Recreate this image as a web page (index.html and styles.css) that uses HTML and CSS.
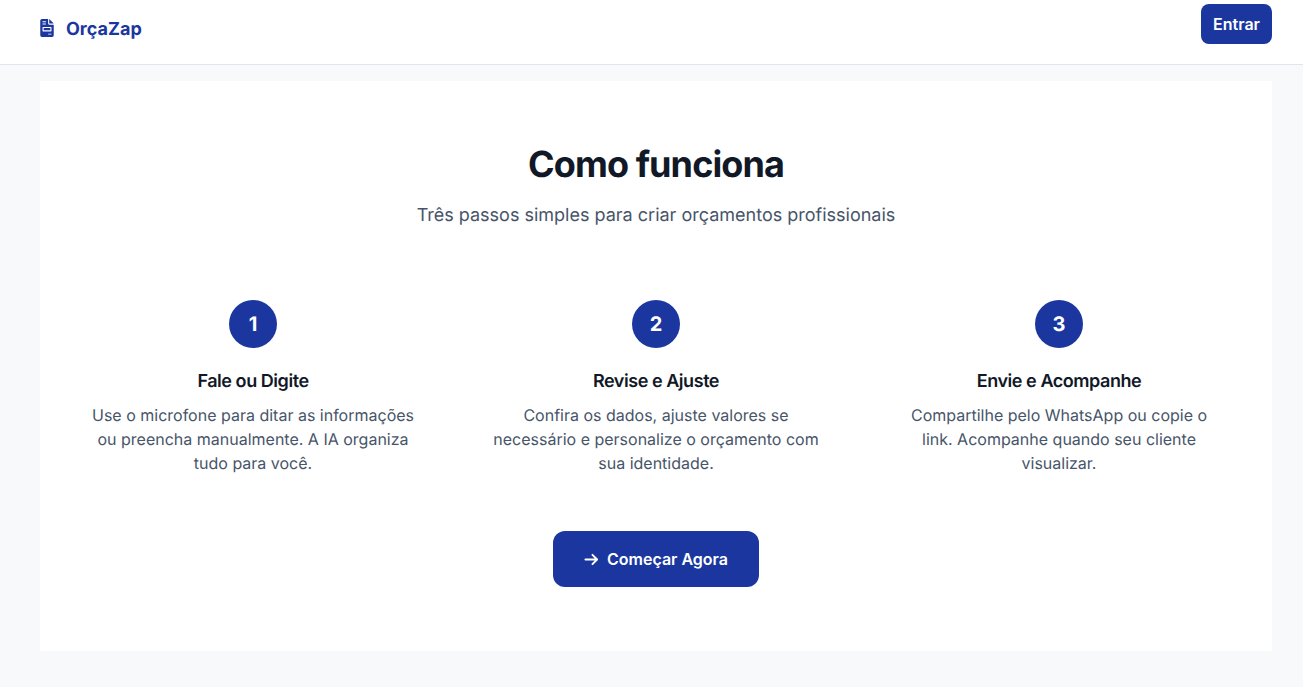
FILE: index.html
```html
<!DOCTYPE html>
<html lang="pt-BR">
<head>
    <meta charset="UTF-8">
    <title>OrçaZap</title>
    <link rel="stylesheet" href="styles.css">
</head>
<body>
    <header class="topbar">
        <a class="brand" href="#">
            <svg class="brand-icon" viewBox="0 0 12 16" aria-hidden="true">
                <path fill="#1b379f" fill-rule="evenodd" d="M1.500 0H7v4a1 1 0 0 0 1 1h4v9.500a1.500 1.500 0 0 1-1.500 1.500h-9A1.500 1.500 0 0 1 0 14.500v-13A1.500 1.500 0 0 1 1.500 0ZM2 2v.800h3v-.800ZM2 4v.800h3v-.800ZM2.500 7a.5.500 0 0 0-.5.500v3a.5.500 0 0 0 .5.500h7a.5.500 0 0 0 .5-.500v-3a.5.500 0 0 0-.5-.500ZM3 8h6v2H3ZM7 13v.800h3v-.800Z"/>
                <path fill="#1b379f" d="M8 0l4 4H8Z"/>
            </svg>
            <span class="brand-name">OrçaZap</span>
        </a>
        <button class="btn btn-login" type="button">Entrar</button>
    </header>

    <main class="page">
        <section class="how">
            <h1>Como funciona</h1>
            <p class="how-sub">Três passos simples para criar orçamentos profissionais</p>

            <div class="steps">
                <div class="step">
                    <div class="step-num">1</div>
                    <h3>Fale ou Digite</h3>
                    <p>Use o microfone para ditar as informações ou preencha manualmente. A IA organiza tudo para você.</p>
                </div>
                <div class="step">
                    <div class="step-num">2</div>
                    <h3>Revise e Ajuste</h3>
                    <p>Confira os dados, ajuste valores se necessário e personalize o orçamento com sua identidade.</p>
                </div>
                <div class="step">
                    <div class="step-num">3</div>
                    <h3>Envie e Acompanhe</h3>
                    <p>Compartilhe pelo WhatsApp ou copie o link. Acompanhe quando seu cliente visualizar.</p>
                </div>
            </div>

            <button class="btn btn-start" type="button">
                <svg class="arrow" viewBox="0 0 16 16" aria-hidden="true">
                    <path d="M1.500 8h12.500M9 3l5 5-5 5" fill="none" stroke="#fff" stroke-width="2" stroke-linecap="round" stroke-linejoin="round"/>
                </svg>
                Começar Agora
            </button>
        </section>
    </main>
</body>
</html>
```

FILE: styles.css
```css
* { box-sizing: border-box; }
body { margin: 0; font-family: Inter, sans-serif; text-rendering: geometricPrecision; -webkit-font-smoothing: antialiased; background: #f8f9fb; color: #111827; height: 687px; overflow: hidden; }

.topbar { height: 65px; background: #fff; border-bottom: 1px solid #e0e5ee; padding: 4px 31px 0 40px; display: flex; justify-content: space-between; align-items: flex-start; }
.brand { display: flex; align-items: center; gap: 12px; height: 48px; color: #1b379f; font-size: 18px; font-weight: 700; text-decoration: none; }
.brand-icon { width: 14px; height: 18px; }
.brand-name { padding-top: 2px; }

.btn { background: #1b379f; color: #fff; border: none; font-family: inherit; font-weight: 600; cursor: pointer; }
.btn-login { width: 71px; height: 40px; border-radius: 8px; font-size: 16px; padding: 0; }

.page { padding: 16px 31px 0 40px; }
.how { height: 570px; background: #fff; padding-top: 60px; display: flex; flex-direction: column; align-items: center; }
.how h1 { margin: 0; font-size: 36px; line-height: 46px; font-weight: 700; letter-spacing: -0.9px; }
.how-sub { margin: 15px 0 0; font-size: 18px; line-height: 27px; color: #475569; }

.steps { width: 100%; margin-top: 71px; display: grid; grid-template-columns: repeat(3, 355px); justify-content: center; column-gap: 48px; }
.step { padding: 0 14px; text-align: center; display: flex; flex-direction: column; align-items: center; }
.step-num { width: 48px; height: 48px; border-radius: 50%; background: #1b379f; color: #fff; font-size: 20px; font-weight: 700; display: flex; align-items: center; justify-content: center; }
.step h3 { margin: 21px 0 8px; font-size: 18px; line-height: 26px; font-weight: 600; letter-spacing: -0.45px; }
.step p { margin: 0; font-size: 16px; line-height: 24px; color: #475569; }

.btn-start { margin-top: 56px; width: 206px; height: 56px; border-radius: 12px; font-size: 16px; display: flex; align-items: center; justify-content: center; gap: 8px; }
.arrow { width: 15px; height: 15px; }
```
